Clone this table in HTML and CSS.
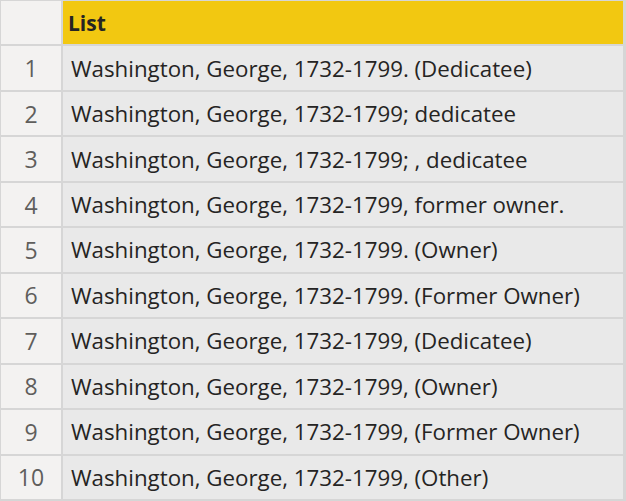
FILE: index.html
```html
<!DOCTYPE html>
<html>
<head>
<meta charset="utf-8">
<link rel="stylesheet" href="styles.css">
</head>
<body>
<div class="table">
  <div class="row head"><div class="idx"></div><div class="cell">List</div></div>
  <div class="row"><div class="idx">1</div><div class="cell">Washington, George, 1732-1799. (Dedicatee)</div></div>
  <div class="row"><div class="idx">2</div><div class="cell">Washington, George, 1732-1799; dedicatee</div></div>
  <div class="row"><div class="idx">3</div><div class="cell">Washington, George, 1732-1799; , dedicatee</div></div>
  <div class="row"><div class="idx">4</div><div class="cell">Washington, George, 1732-1799, former owner.</div></div>
  <div class="row"><div class="idx">5</div><div class="cell">Washington, George, 1732-1799. (Owner)</div></div>
  <div class="row"><div class="idx">6</div><div class="cell">Washington, George, 1732-1799. (Former Owner)</div></div>
  <div class="row"><div class="idx">7</div><div class="cell">Washington, George, 1732-1799, (Dedicatee)</div></div>
  <div class="row"><div class="idx">8</div><div class="cell">Washington, George, 1732-1799, (Owner)</div></div>
  <div class="row"><div class="idx">9</div><div class="cell">Washington, George, 1732-1799, (Former Owner)</div></div>
  <div class="row"><div class="idx">10</div><div class="cell">Washington, George, 1732-1799, (Other)</div></div>
</div>
</body>
</html>
```
FILE: styles.css
```css
html, body { margin: 0; padding: 0; background: #ffffff; }
.table {
  width: 626px;
  height: 501px;
  box-sizing: border-box;
  background: #d6d6d6;
  padding: 1px 3px 2px 1px;
  display: grid;
  grid-template-columns: 60px 1fr;
  grid-auto-rows: 1fr;
  gap: 2px;
  font-family: "Open Sans", "Noto Sans", sans-serif;
}
.row { display: contents; }
.idx {
  background: #f3f2f1;
  color: #5f5e5c;
  font-size: 23px;
  display: flex;
  align-items: center;
  justify-content: center;
}
.cell {
  background: #e9e9e9;
  color: #252423;
  font-size: 22.3px;
  display: flex;
  align-items: center;
  padding-left: 8px;
  white-space: nowrap;
}
.head .cell {
  background: #f2c811;
  font-weight: 700;
  font-size: 21px;
  padding-left: 5px;
  color: #252423;
}
.head .idx { background: #f3f2f1; }
```
